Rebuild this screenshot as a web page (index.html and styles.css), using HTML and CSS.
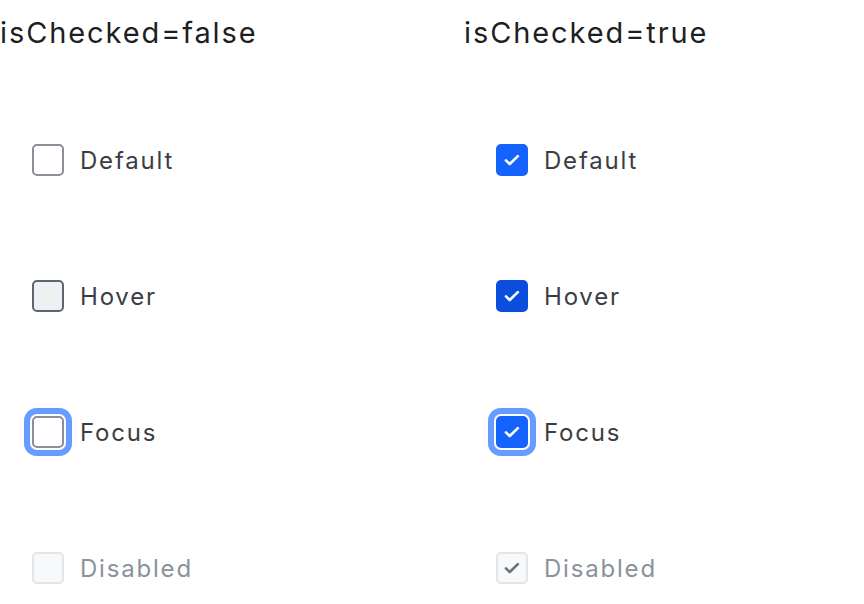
FILE: index.html
```html
<!DOCTYPE html>
<html lang="en">
<head>
  <meta charset="UTF-8">
  <meta name="viewport" content="width=device-width, initial-scale=1.0">
  <title>Checkbox states</title>
  <link rel="stylesheet" href="styles.css">
</head>
<body>
  <div class="board">
    <div class="column">
      <h2 class="column-title">isChecked=false</h2>
      <div class="rows">
        <label class="checkbox">
          <span class="box"></span>
          <span class="text">Default</span>
        </label>
        <label class="checkbox hover">
          <span class="box"></span>
          <span class="text">Hover</span>
        </label>
        <label class="checkbox focus">
          <span class="box"></span>
          <span class="text">Focus</span>
        </label>
        <label class="checkbox disabled">
          <span class="box"></span>
          <span class="text">Disabled</span>
        </label>
      </div>
    </div>

    <div class="column">
      <h2 class="column-title">isChecked=true</h2>
      <div class="rows">
        <label class="checkbox checked">
          <span class="box">
            <svg viewBox="0 0 16 16" width="18" height="18"><path d="M2.6 8.3l3.4 3.3 7.2-7" fill="none" stroke="currentColor" stroke-width="2.3" stroke-linecap="round" stroke-linejoin="round"/></svg>
          </span>
          <span class="text">Default</span>
        </label>
        <label class="checkbox checked hover">
          <span class="box">
            <svg viewBox="0 0 16 16" width="18" height="18"><path d="M2.6 8.3l3.4 3.3 7.2-7" fill="none" stroke="currentColor" stroke-width="2.3" stroke-linecap="round" stroke-linejoin="round"/></svg>
          </span>
          <span class="text">Hover</span>
        </label>
        <label class="checkbox checked focus">
          <span class="box">
            <svg viewBox="0 0 16 16" width="18" height="18"><path d="M2.6 8.3l3.4 3.3 7.2-7" fill="none" stroke="currentColor" stroke-width="2.3" stroke-linecap="round" stroke-linejoin="round"/></svg>
          </span>
          <span class="text">Focus</span>
        </label>
        <label class="checkbox checked disabled">
          <span class="box">
            <svg viewBox="0 0 16 16" width="18" height="18"><path d="M2.6 8.3l3.4 3.3 7.2-7" fill="none" stroke="currentColor" stroke-width="2.3" stroke-linecap="round" stroke-linejoin="round"/></svg>
          </span>
          <span class="text">Disabled</span>
        </label>
      </div>
    </div>
  </div>
</body>
</html>
```

FILE: styles.css
```css
body {
  margin: 0;
  padding: 0;
  background-color: #ffffff;
  font-family: Inter, "Noto Sans", sans-serif;
  color: #1d1f24;
  overflow: hidden;
}
.board {
  display: grid;
  grid-template-columns: 464px 1fr;
}
.column-title {
  margin: 0;
  height: 66px;
  line-height: 66px;
  font-size: 29px;
  font-weight: 400;
  letter-spacing: 1.9px;
  color: #1d1f24;
}
.rows {
  display: flex;
  flex-direction: column;
  gap: 104px;
  padding: 78px 0 0 32px;
}
.checkbox {
  display: flex;
  align-items: center;
  gap: 16px;
  height: 32px;
  cursor: pointer;
}
.box {
  box-sizing: border-box;
  width: 32px;
  height: 32px;
  flex: none;
  display: flex;
  align-items: center;
  justify-content: center;
  border: 2px solid #8a8e9b;
  border-radius: 5px;
  background-color: #ffffff;
  color: #ffffff;
}
.text {
  font-size: 24px;
  letter-spacing: 1.8px;
  color: #3a3d45;
}
.hover .box {
  border-color: #5f6472;
  background-color: #eef0f4;
}
.focus .box {
  box-shadow: 0 0 0 2px #ffffff, 0 0 0 8px #669cff;
}
.disabled {
  cursor: default;
}
.disabled .box {
  border-color: #e3e5ea;
  background-color: #f8f9fa;
}
.disabled .text {
  color: #8c919e;
}
.checked .box {
  border-color: #1463ff;
  background-color: #1463ff;
}
.checked.hover .box {
  border-color: #0b4ddc;
  background-color: #0b4ddc;
}
.checked.disabled .box {
  border-color: #e3e5ea;
  background-color: #f8f9fa;
  color: #6c7180;
}
```
